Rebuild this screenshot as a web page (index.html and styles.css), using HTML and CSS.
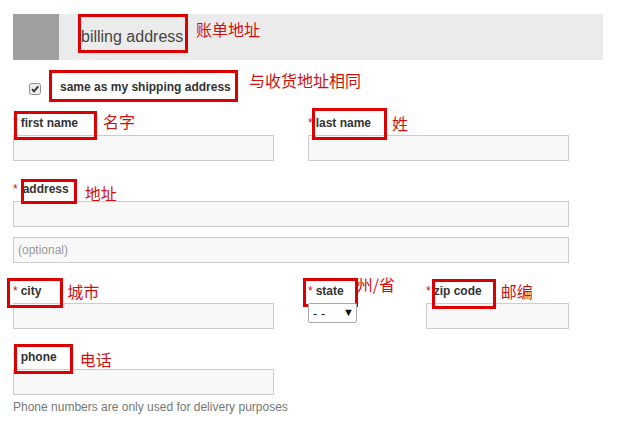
FILE: index.html
```html
<!DOCTYPE html>
<html lang="zh-CN">
<head>
<meta charset="utf-8">
<title>billing address</title>
<link rel="stylesheet" href="styles.css">
</head>
<body>
<div class="page">
  <div class="header">
    <div class="thumb"></div>
    <h2 class="title">billing address</h2>
    <span class="zh zh-head">账单地址</span>
  </div>

  <div class="same-row">
    <span class="check">
      <svg width="12" height="12" viewBox="0 0 12 12">
        <rect x="0.5" y="0.5" width="11" height="11" rx="2" fill="#ececec" stroke="#8e8e8e"/>
        <path d="M3 6.2 L5 8.4 L9.2 3.4" fill="none" stroke="#333" stroke-width="1.8"/>
      </svg>
    </span>
    <span class="same-box">same as my shipping address</span>
    <span class="zh zh-same">与收货地址相同</span>
  </div>

  <div class="two-col first-row">
    <div class="field">
      <div class="lbl"><span class="req">*</span><span class="txt m-first">first name</span><span class="zh zh-first">名字</span></div>
      <input class="inp" type="text">
    </div>
    <div class="field">
      <div class="lbl"><span class="req">*</span><span class="txt m-last">last name</span><span class="zh zh-last">姓</span></div>
      <input class="inp" type="text">
    </div>
  </div>

  <div class="field section">
    <div class="lbl"><span class="req req-wide">*</span><span class="txt m-address">address</span><span class="zh zh-address">地址</span></div>
    <input class="inp inp-full" type="text">
    <input class="inp inp-full inp-optional" type="text" placeholder="(optional)">
  </div>

  <div class="two-col section">
    <div class="field">
      <div class="lbl"><span class="req">*</span><span class="txt m-city">city</span><span class="zh zh-city">城市</span></div>
      <input class="inp" type="text">
    </div>
    <div class="state-zip">
      <div class="field state-col">
        <div class="lbl"><span class="req">*</span><span class="txt m-state">state</span><span class="zh zh-state">州/省</span></div>
        <div class="select-wrap">
          <select class="state-select" aria-label="state"><option>- -</option></select>
          <span class="arrow">▼</span>
        </div>
      </div>
      <div class="field zip-col">
        <div class="lbl"><span class="req">*</span><span class="txt m-zip">zip code</span><span class="zh zh-zip">邮编</span></div>
        <input class="inp" type="text">
      </div>
    </div>
  </div>

  <div class="field section">
    <div class="lbl"><span class="req">*</span><span class="txt m-phone">phone</span><span class="zh zh-phone">电话</span></div>
    <input class="inp" type="text">
  </div>
  <p class="note">Phone numbers are only used for delivery purposes</p>
</div>
</body>
</html>
```

FILE: styles.css
```css
* { box-sizing: border-box; }
html, body { margin: 0; padding: 0; background: #fff; }
body {
  font-family: "Liberation Sans", Arial, sans-serif;
  color: #3a3a3a;
}
.page {
  padding: 14px 0 0 13px;
  width: 617px;
}

/* header */
.header {
  display: flex;
  align-items: flex-start;
  width: 590px;
  height: 46px;
  background: #ebebeb;
}
.thumb {
  width: 46px;
  height: 46px;
  background: #a0a0a0;
}
.title {
  margin: 0 0 0 19px;
  width: 110px;
  height: 39px;
  border: 3px solid #dd0000;
  padding: 9px 0 0 0;
  font-size: 16px;
  line-height: 22px;
  font-weight: normal;
  color: #444;
  white-space: nowrap;
}

.zh {
  font-family: "Noto Sans CJK SC", sans-serif;
  font-size: 16px;
  line-height: 16px;
  color: #cc1111;
  white-space: nowrap;
}
.zh-head { margin: 7px 0 0 8px; }

/* same as shipping row */
.same-row {
  display: flex;
  align-items: flex-start;
  margin-top: 10px;
  height: 32px;
}
.check {
  display: block;
  width: 12px;
  height: 12px;
  margin: 13px 0 0 16px;
}
.check svg { display: block; }
.same-box {
  display: block;
  margin-left: 8px;
  width: 189px;
  height: 32px;
  border: 3px solid #dd0000;
  padding: 2px 0 0 8px;
  font-size: 12px;
  line-height: 24px;
  font-weight: bold;
  color: #333;
  white-space: nowrap;
}
.zh-same { display: block; margin: 2px 0 0 11px; }

/* fields */
.two-col {
  display: grid;
  grid-template-columns: 261px 261px;
  column-gap: 34px;
  width: 556px;
}
.first-row { margin-top: 11px; }
.section { margin-top: 18px; }
.field { display: flex; flex-direction: column; align-items: flex-start; }

.lbl {
  height: 20px;
  margin-bottom: 2px;
  font-size: 12px;
  line-height: 20px;
  white-space: nowrap;
}
.req {
  color: #cc1111;
  font-size: 12px;
  margin-right: 3px;
}
.req-wide { margin-right: 5px; }
.txt {
  position: relative;
  display: inline-block;
  font-weight: bold;
  color: #333;
}
.txt::after {
  content: "";
  position: absolute;
  left: var(--bl);
  top: var(--bt);
  width: var(--bw);
  height: var(--bh);
  border: 3px solid #dd0000;
}
.m-first   { --bl: -7px;  --bt: -2px; --bw: 77px; --bh: 23px; }
.m-last    { --bl: -4px;  --bt: -5px; --bw: 69px; --bh: 26px; }
.m-address { --bl: -2px;  --bt: 0px;  --bw: 50px; --bh: 19px; }
.m-city    { --bl: -14px; --bt: -3px; --bw: 50px; --bh: 24px; }
.m-state   { --bl: -13px; --bt: -3px; --bw: 49px; --bh: 23px; }
.m-zip     { --bl: -2px;  --bt: -2px; --bw: 58px; --bh: 24px; }
.m-phone   { --bl: -7px;  --bt: -3px; --bw: 53px; --bh: 24px; }

.lbl .zh { display: inline-block; vertical-align: top; }
.zh-first   { margin: 0 0 0 25px; }
.zh-last    { margin: 2px 0 0 21px; }
.zh-address { margin: 6px 0 0 16px; }
.zh-city    { margin: 2px 0 0 26px; }
.zh-state   { margin: -5px 0 0 13px; }
.zh-zip     { margin: 2px 0 0 19px; }
.zh-phone   { margin: 4px 0 0 23px; }

.inp {
  display: block;
  width: 261px;
  height: 26px;
  margin: 0;
  border: 1px solid #cccccc;
  background: #f8f8f8;
  padding: 0 4px;
  font-family: "Liberation Sans", Arial, sans-serif;
  font-size: 12px;
  color: #333;
  outline: none;
}
.inp-full { width: 556px; }
.inp-optional { margin-top: 10px; }
.inp::placeholder { color: #999; opacity: 1; }

.state-zip { display: flex; }
.state-col { width: 118px; }
.zip-col { width: 143px; }
.zip-col .inp { width: 143px; }

.select-wrap {
  position: relative;
  width: 49px;
  height: 20px;
}
.state-select {
  appearance: none;
  -webkit-appearance: none;
  display: block;
  width: 49px;
  height: 20px;
  margin: 0;
  padding: 0 0 0 4px;
  border: 1px solid #a9a9a9;
  border-radius: 2px;
  background: #fff;
  font-family: "Liberation Sans", Arial, sans-serif;
  font-size: 13px;
  color: #222;
}
.arrow {
  position: absolute;
  left: 35px;
  top: 4px;
  font-size: 11px;
  line-height: 11px;
  color: #111;
  pointer-events: none;
}

.note {
  margin: 4px 0 0 0;
  font-size: 12px;
  line-height: 16px;
  color: #777;
}
```
